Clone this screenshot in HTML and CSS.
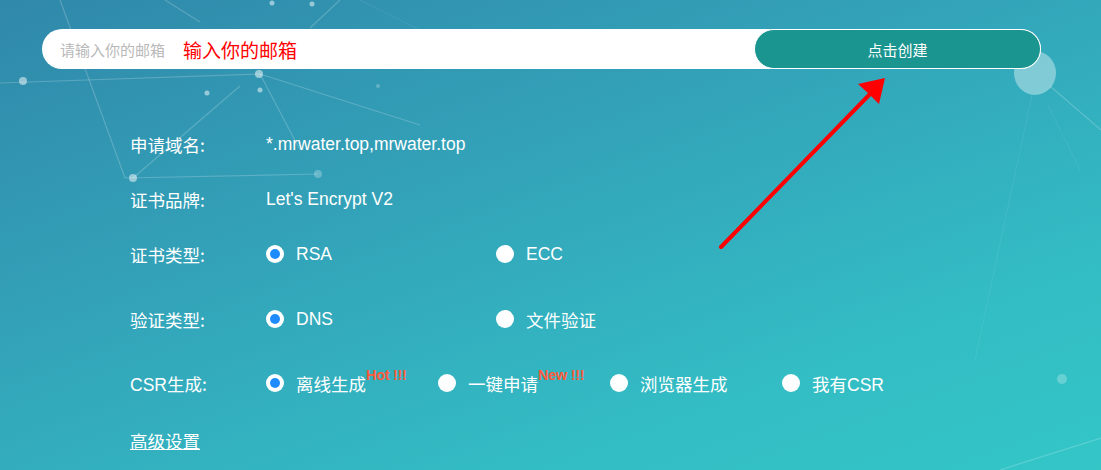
FILE: index.html
```html
<!DOCTYPE html>
<html lang="zh-CN">
<head>
<meta charset="utf-8">
<title>申请证书</title>
<link rel="stylesheet" href="styles.css">
</head>
<body>
<div class="page">
  <svg class="bg-net" width="1101" height="470" viewBox="0 0 1101 470" aria-hidden="true">
    <g stroke="rgba(255,255,255,0.2)" stroke-width="1.2" fill="none">
      <line x1="0" y1="83" x2="260" y2="74"/>
      <line x1="60" y1="0" x2="125" y2="178"/>
      <line x1="125" y1="178" x2="318" y2="174"/>
      <line x1="133" y1="178" x2="240" y2="86"/>
      <line x1="260" y1="74" x2="300" y2="150"/>
      <line x1="260" y1="74" x2="420" y2="125"/>
      <line x1="165" y1="0" x2="200" y2="22"/>
      <line x1="310" y1="28" x2="340" y2="0"/>
      <line x1="1050" y1="86" x2="1101" y2="130"/>
      <line x1="1000" y1="470" x2="1101" y2="438"/>
    </g>
    <g stroke="rgba(255,255,255,0.07)" stroke-width="1" fill="none">
      <line x1="1032" y1="95" x2="975" y2="360"/>
      <line x1="1048" y1="105" x2="1080" y2="170"/>
      <line x1="360" y1="0" x2="420" y2="30"/>
    </g>
    <g fill="rgba(255,255,255,0.5)">
      <circle cx="23" cy="81" r="4"/>
      <circle cx="259" cy="74" r="4"/>
      <circle cx="207" cy="93" r="2.5"/>
      <circle cx="260" cy="90" r="2.5"/>
      <circle cx="272" cy="3" r="2.5"/>
      <circle cx="312" cy="4" r="2.5"/>
      <circle cx="133" cy="178" r="4"/>
    </g>
    <g fill="rgba(255,255,255,0.25)">
      <circle cx="318" cy="174" r="4"/>
      <circle cx="1062" cy="379" r="5"/>
      <circle cx="378" cy="86" r="2"/>
    </g>
    <ellipse cx="1035" cy="73" rx="21" ry="22" fill="rgba(255,255,255,0.38)"/>
  </svg>

  <form class="mailbar">
    <div class="mail-input">
      <span class="placeholder">请输入你的邮箱</span>
      <span class="hint">输入你的邮箱</span>
    </div>
    <button type="button" class="create-btn">点击创建</button>
  </form>

  <svg class="arrow" width="1101" height="470" viewBox="0 0 1101 470" aria-hidden="true">
    <line x1="721" y1="247" x2="872" y2="92" stroke="#ff0000" stroke-width="4" stroke-linecap="round"/>
    <polygon points="885,78 879,104 868,93 858,84" fill="#ff0000"/>
  </svg>

  <div class="form">
    <div class="row r-domain">
      <span class="label">申请域名:</span>
      <span class="value">*.mrwater.top,mrwater.top</span>
    </div>
    <div class="row r-brand">
      <span class="label">证书品牌:</span>
      <span class="value">Let's Encrypt V2</span>
    </div>
    <div class="row r-type">
      <span class="label">证书类型:</span>
      <div class="options wide">
        <span class="opt"><i class="radio on"></i><span class="latin">RSA</span></span>
        <span class="opt"><i class="radio"></i><span class="latin">ECC</span></span>
      </div>
    </div>
    <div class="row r-verify">
      <span class="label">验证类型:</span>
      <div class="options wide">
        <span class="opt"><i class="radio on"></i><span class="latin">DNS</span></span>
        <span class="opt"><i class="radio"></i>文件验证</span>
      </div>
    </div>
    <div class="row r-csr">
      <span class="label"><span class="latin">CSR</span>生成:</span>
      <div class="options narrow">
        <span class="opt"><i class="radio on"></i><span>离线生成</span><span class="tag">Hot !!!</span></span>
        <span class="opt"><i class="radio"></i><span>一键申请</span><span class="tag">New !!!</span></span>
        <span class="opt"><i class="radio"></i><span>浏览器生成</span></span>
        <span class="opt"><i class="radio"></i><span>我有<span class="latin">CSR</span></span></span>
      </div>
    </div>
    <div class="row r-adv">
      <a class="adv" href="#">高级设置</a>
    </div>
  </div>
</div>
</body>
</html>
```

FILE: styles.css
```css
* { box-sizing: border-box; }

html, body {
  margin: 0;
  padding: 0;
}

body {
  font-family: "Noto Sans CJK SC", "Liberation Sans", sans-serif;
  color: #fff;
}

.page {
  position: relative;
  width: 1101px;
  height: 470px;
  overflow: hidden;
  background: linear-gradient(160deg, #3088aa 0%, #33a3b9 40%, #33bcc4 75%, #33c6c7 100%);
  padding: 29px 60px 0 42px;
}

.bg-net {
  position: absolute;
  left: 0;
  top: 0;
  pointer-events: none;
}

.arrow {
  position: absolute;
  left: 0;
  top: 0;
  pointer-events: none;
  z-index: 3;
}

.mailbar {
  position: relative;
  z-index: 2;
  display: flex;
  width: 999px;
  height: 40px;
  margin: 0;
  background: #fff;
  border-radius: 20px;
}

.mail-input {
  flex: 1;
  display: flex;
  align-items: center;
  padding-left: 18px;
  gap: 18px;
}

.placeholder {
  font-size: 15px;
  color: #b9b9b9;
}

.hint {
  font-size: 19px;
  color: #ff0000;
}

.create-btn {
  width: 287px;
  height: 40px;
  margin: 0;
  border: 1px solid #fff;
  border-radius: 20px;
  background: #1a958f;
  color: #fff;
  font-family: "Noto Sans CJK SC", sans-serif;
  font-size: 15px;
  padding: 0;
}

.form {
  position: relative;
  z-index: 2;
  padding-left: 88px;
  padding-top: 60px;
}

.row {
  display: flex;
  align-items: center;
  height: 30px;
  font-size: 17.5px;
}

.r-domain { margin-top: 0; }
.r-brand { margin-top: 25px; }
.r-type { margin-top: 25px; }
.r-verify { margin-top: 35px; }
.r-csr { margin-top: 34px; }
.r-adv { margin-top: 27px; }

.label {
  width: 136px;
  flex: none;
}

.value {
  font-family: "Liberation Sans", sans-serif;
}

.latin {
  font-family: "Liberation Sans", sans-serif;
}

.options {
  display: flex;
  align-items: center;
}

.opt {
  display: flex;
  align-items: center;
  gap: 12px;
  position: relative;
}

.options.wide .opt { width: 230px; }
.options.narrow .opt { width: 172px; }

.radio {
  display: block;
  width: 18px;
  height: 18px;
  border-radius: 50%;
  background: #fff;
  position: relative;
  flex: none;
}

.radio.on::after {
  content: "";
  position: absolute;
  left: 4px;
  top: 4px;
  width: 10px;
  height: 10px;
  border-radius: 50%;
  background: #1e8cff;
}

.tag {
  font-family: "Liberation Sans", sans-serif;
  font-weight: bold;
  font-size: 14.5px;
  line-height: 1;
  color: #ff5b3a;
  letter-spacing: -0.3px;
  align-self: flex-start;
  margin-left: -12px;
  margin-top: -3px;
}

.adv {
  color: #fff;
  font-size: 17.5px;
  text-decoration: underline;
}
```
